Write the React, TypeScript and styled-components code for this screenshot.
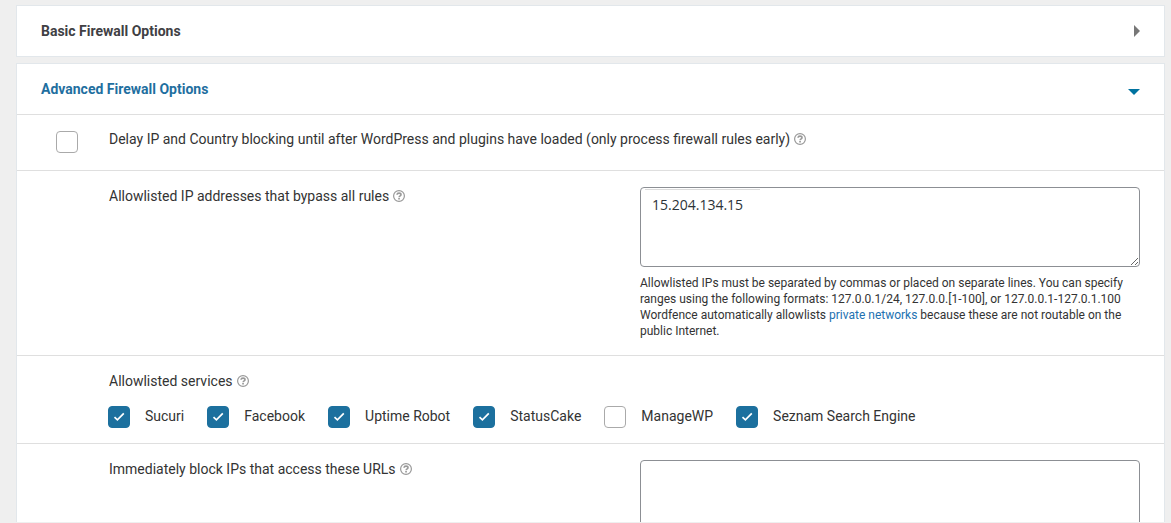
import React, { useState } from "react";
import styled, { createGlobalStyle } from "styled-components";

const GlobalStyle = createGlobalStyle`
  *, *::before, *::after { box-sizing: border-box; }
  body {
    margin: 0;
    background: #efefef;
    color: #333;
    font-family: Roboto, "Liberation Sans", sans-serif;
    font-size: 14px;
    line-height: 20px;
  }
`;

const Page = styled.main`
  display: flex;
  flex-direction: column;
  gap: 6px;
  height: 100vh;
  padding: 5px 6px 1px 16px;
  overflow: hidden;
`;

const Panel = styled.section<{ $fill?: boolean }>`
  flex: ${(p) => (p.$fill ? "1 1 0" : "0 0 auto")};
  min-height: 0;
  overflow: hidden;
  background: #fff;
  border: 1px solid #e2e7eb;
  border-bottom-width: ${(p) => (p.$fill ? "0" : "1px")};
`;

const PanelHeading = styled.h2`
  margin: 0;
  font-size: 14px;
`;

const PanelToggle = styled.button<{ $open: boolean }>`
  display: flex;
  align-items: center;
  justify-content: space-between;
  width: 100%;
  height: 50px;
  padding: 0 24px;
  border: 0;
  background: none;
  color: ${(p) => (p.$open ? "#1f6fa0" : "#404044")};
  font: inherit;
  font-weight: 700;
  line-height: 20px;
  text-align: left;
  cursor: pointer;
`;

const Arrow = styled.svg`
  display: block;
  flex: none;
`;

const Row = styled.div<{ $tight?: boolean }>`
  display: grid;
  grid-template-columns: 68px minmax(0, 1fr);
  min-height: 56px;
  padding: 16px 24px ${(p) => (p.$tight ? "15px" : "16px")};
  border-top: 1px solid #dfdfdf;
`;

const RowMark = styled.div`
  padding-left: 15px;
`;

const RowBody = styled.div`
  grid-column: 2;
`;

const Field = styled.div`
  grid-column: 2;
  display: grid;
  grid-template-columns: minmax(0, 1fr) minmax(0, 500px);
`;

const Caption = styled.div<{ $short?: boolean }>`
  display: flex;
  align-items: center;
  align-self: start;
  gap: 4px;
  height: ${(p) => (p.$short ? "16px" : "18px")};
`;

const HelpLink = styled.a`
  display: block;
  flex: none;
  color: #999;
`;

const HelpIcon = styled.svg`
  display: block;
`;

const TextBox = styled.textarea`
  display: block;
  width: 100%;
  height: 80px;
  padding: 7px 11px;
  border: 1px solid #8c8f94;
  border-radius: 4px;
  background: #fff;
  color: #2c3338;
  font-family: "Open Sans", "Noto Sans", sans-serif;
  font-size: 14px;
  line-height: 20px;
`;

const AddressBox = styled(TextBox)`
  background: linear-gradient(#dcdcdc, #dcdcdc) 4px 1px / 115px 1px no-repeat #fff;
`;

const Hint = styled.p`
  margin: 8px 0 0;
  font-size: 12px;
  line-height: 16px;
`;

const TextLink = styled.a`
  color: #2271b1;
  text-decoration: none;
`;

const Services = styled.div`
  display: flex;
  flex-wrap: wrap;
  gap: 8px 23px;
  margin: 16px 0 0 -1px;
`;

const Service = styled.label`
  display: flex;
  align-items: flex-start;
  gap: 15px;
  height: 22px;
  cursor: pointer;
`;

const TickFrame = styled.span`
  display: grid;
  place-items: center;
  width: 22px;
  height: 22px;

  & > * {
    grid-area: 1 / 1;
  }
`;

const TickInput = styled.input`
  appearance: none;
  width: 22px;
  height: 22px;
  margin: 0;
  border: 1px solid #aaa;
  border-radius: 4px;
  background: #fff;
  cursor: pointer;

  &:checked {
    border-color: #1c709e;
    background: #1c709e;
  }
`;

const TickMark = styled.svg`
  display: block;
  pointer-events: none;
`;

function Tick({ id, initial = false }: { id?: string; initial?: boolean }) {
  const [checked, setChecked] = useState(initial);
  return (
    <TickFrame>
      <TickInput id={id} type="checkbox" checked={checked} onChange={() => setChecked(!checked)} />
      {checked && (
        <TickMark width="22" height="22" viewBox="0 0 22 22" aria-hidden="true">
          <path d="M6.5 11.1 9.4 13.8 15.8 7.3" fill="none" stroke="#fff" strokeWidth="1.7" />
        </TickMark>
      )}
    </TickFrame>
  );
}

function Help({ topic }: { topic: string }) {
  return (
    <HelpLink href="#help" aria-label={`Help: ${topic}`}>
      <HelpIcon width="12" height="12" viewBox="0 0 12 12" aria-hidden="true">
        <circle cx="6" cy="6" r="5.4" fill="none" stroke="currentColor" strokeWidth="1.2" />
        <path
          d="M4 4.8C4.1 3.6 4.9 3.1 6 3.1s2 .6 2 1.6C8 5.9 6.2 5.8 6.1 7.2"
          fill="none"
          stroke="currentColor"
          strokeWidth="1.6"
        />
        <path d="M5.2 8h1.7v1.5H5.2z" fill="currentColor" />
      </HelpIcon>
    </HelpLink>
  );
}

function PanelHeader({ title, open, onToggle }: { title: string; open: boolean; onToggle: () => void }) {
  return (
    <PanelHeading>
      <PanelToggle type="button" $open={open} aria-expanded={open} onClick={onToggle}>
        {title}
        <Arrow width="12" height="16" viewBox="0 0 12 16" aria-hidden="true">
          {open ? <path d="M0 8h12L6 14z" fill="#0073a0" /> : <path d="M6 2v12l6-6z" fill="#777" />}
        </Arrow>
      </PanelToggle>
    </PanelHeading>
  );
}

const services = [
  { name: "Sucuri", on: true },
  { name: "Facebook", on: true },
  { name: "Uptime Robot", on: true },
  { name: "StatusCake", on: true },
  { name: "ManageWP", on: false },
  { name: "Seznam Search Engine", on: true },
];

export default function App() {
  const [basicOpen, setBasicOpen] = useState(false);
  const [advancedOpen, setAdvancedOpen] = useState(true);

  return (
    <>
      <GlobalStyle />
      <Page>
        <Panel>
          <PanelHeader title="Basic Firewall Options" open={basicOpen} onToggle={() => setBasicOpen(!basicOpen)} />
        </Panel>
        <Panel $fill={advancedOpen}>
          <PanelHeader
            title="Advanced Firewall Options"
            open={advancedOpen}
            onToggle={() => setAdvancedOpen(!advancedOpen)}
          />
          {advancedOpen && (
            <>
              <Row>
                <RowMark>
                  <Tick id="delay-blocking" />
                </RowMark>
                <Caption $short>
                  <label htmlFor="delay-blocking">
                    Delay IP and Country blocking until after WordPress and plugins have loaded (only process firewall
                    rules early)
                  </label>
                  <Help topic="delay blocking" />
                </Caption>
              </Row>
              <Row>
                <Field>
                  <Caption>
                    <label htmlFor="allowlist">Allowlisted IP addresses that bypass all rules</label>
                    <Help topic="allowlisted IP addresses" />
                  </Caption>
                  <div>
                    <AddressBox id="allowlist" defaultValue="15.204.134.15" />
                    <Hint>
                      Allowlisted IPs must be separated by commas or placed on separate lines. You can specify ranges
                      using the following formats: 127.0.0.1/24, 127.0.0.[1-100], or 127.0.0.1-127.0.1.100
                      <br />
                      Wordfence automatically allowlists <TextLink href="#private">private networks</TextLink> because
                      these are not routable on the public Internet.
                    </Hint>
                  </div>
                </Field>
              </Row>
              <Row $tight>
                <RowBody>
                  <Caption>
                    Allowlisted services
                    <Help topic="allowlisted services" />
                  </Caption>
                  <Services>
                    {services.map((s) => (
                      <Service key={s.name}>
                        <Tick initial={s.on} />
                        {s.name}
                      </Service>
                    ))}
                  </Services>
                </RowBody>
              </Row>
              <Row>
                <Field>
                  <Caption>
                    <label htmlFor="blocked-urls">Immediately block IPs that access these URLs</label>
                    <Help topic="immediately blocked URLs" />
                  </Caption>
                  <TextBox id="blocked-urls" />
                </Field>
              </Row>
            </>
          )}
        </Panel>
      </Page>
    </>
  );
}
